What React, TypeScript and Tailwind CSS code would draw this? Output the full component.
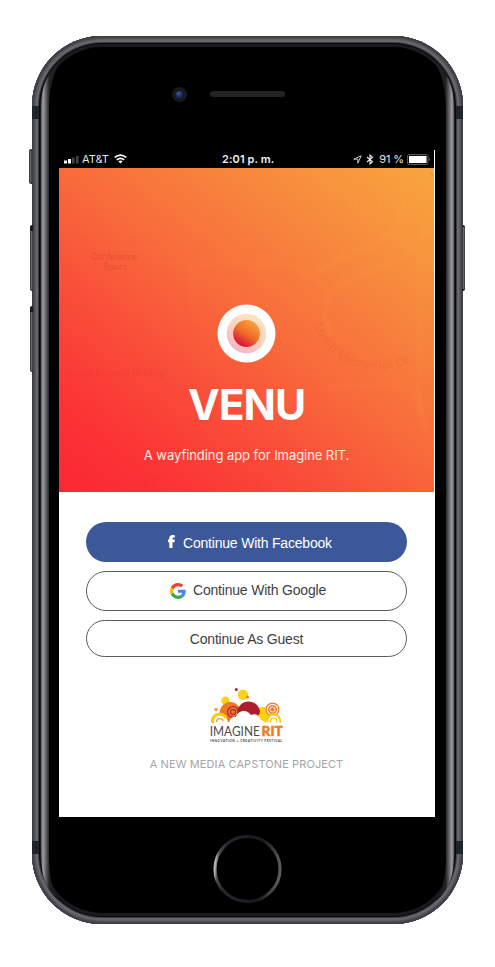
import type { ReactNode } from "react";

function DeviceBevel() {
  const edge =
    "M30 23 C17 33 9 49 9 72 V818 C9 840 14 854 27 865 C20 854 17 840 17 816 V74 C17 54 21 36 30 23Z";
  return (
    <svg className="pointer-events-none absolute inset-0" width="431" height="888" viewBox="0 0 431 888">
      <defs>
        <linearGradient id="bevel" gradientUnits="userSpaceOnUse" x1="9" y1="0" x2="17.5" y2="0">
          <stop offset="0" stopColor="#55565a" />
          <stop offset="0.25" stopColor="#a0a0a2" />
          <stop offset="0.4" stopColor="#828285" />
          <stop offset="0.7" stopColor="#4f4f53" />
          <stop offset="1" stopColor="#202023" />
        </linearGradient>
      </defs>
      <path d={edge} fill="url(#bevel)" />
      <path d={edge} fill="url(#bevel)" transform="translate(431 0) scale(-1 1)" />
      <path d="M0 70h7v13H0zM424 70h7v13h-7zM0 805h7v13H0zM424 805h7v13h-7z" fill="#20242a" />
    </svg>
  );
}

function SideButtons() {
  const base = "absolute bg-linear-to-r from-[#25272b] via-[#66686d] to-[#303136]";
  return (
    <>
      <div className={`${base} -left-[3px] top-[113px] h-[35px] w-[3px] rounded-l-xs border-y-2 border-[#3a3b3f]`} />
      <div className={`${base} -left-[2px] top-[189px] h-[66px] w-[3px] rounded-l-xs border-t-[6px] border-b border-[#181a1e]`} />
      <div className={`${base} -left-[2px] top-[270px] h-[66px] w-[3px] rounded-l-xs border-t-[6px] border-b border-[#181a1e]`} />
      <div className={`${base} -right-[2px] top-[189px] h-[66px] w-[3px] rounded-r-xs border-y-2 border-[#222327]`} />
    </>
  );
}

function StatusBar() {
  return (
    <div className="relative flex h-[18px] w-[375px] items-center justify-between bg-black pr-[4px] pl-[5px] text-[11px] leading-none text-[#e6e6e6]">
      <div className="flex items-center">
        <svg width="15" height="8" viewBox="0 0 15 8" className="mt-[2px]">
          <rect x="0" y="4.5" width="3" height="3" fill="#fff" />
          <rect x="4" y="3" width="3" height="4.5" fill="#fff" />
          <rect x="8" y="1.5" width="2.6" height="6" fill="#444" />
          <rect x="12" y="0" width="2.6" height="7.5" fill="#444" />
        </svg>
        <span className="ml-[3px] mt-[1px]">AT&amp;T</span>
        <svg width="13" height="10" viewBox="0 0 13 10" className="ml-[5px]" fill="none" stroke="#fff" strokeWidth="1.7">
          <path d="M.7 3.4Q6.5-1.3 12.3 3.4M2.8 5.8Q6.5 2.8 10.2 5.8" />
          <path d="M6.5 9.5 4.4 7.4Q6.5 5.8 8.6 7.4Z" fill="#fff" stroke="none" />
        </svg>
      </div>
      <span className="absolute left-[163px] mt-[1px] text-[11px] font-semibold tracking-[0.1px] text-[#f0f0f0]">2:01 p. m.</span>
      <div className="flex items-center">
        <svg width="9" height="9" viewBox="0 0 9 9" className="mr-[4px]" fill="none" stroke="#ddd" strokeWidth="0.9">
          <path d="M.8 4.2 8.2.8 4.8 8.2V4.2Z" />
        </svg>
        <svg width="8" height="11" viewBox="0 0 8 11" className="mr-[5px]" fill="none" stroke="#eee" strokeWidth="1.1">
          <path d="M1 3 6.5 7.8 4 10V1L6.5 3.2 1 8" />
        </svg>
        <span className="mt-[1px] whitespace-nowrap text-[11px] tracking-[-0.1px]">91 %</span>
        <svg width="24" height="11" viewBox="0 0 24 11" className="-mr-px ml-[3px]">
          <rect x="0.5" y="0.5" width="20.5" height="10" rx="1.5" fill="#111" stroke="#555" />
          <rect x="2" y="2" width="17.5" height="7" fill="#fff" />
          <path d="M22 3.5q2 2 0 4z" fill="#555" />
        </svg>
      </div>
    </div>
  );
}

function MapTexture() {
  return (
    <svg className="absolute inset-0" width="375" height="324" viewBox="0 0 375 324">
      <g fill="none" stroke="#ffc24a" strokeOpacity="0.06" strokeWidth="7">
        <path d="M343 0V36C343 60 325 72 300 82C275 92 262 99 258 108" />
        <path d="M375 42C362 80 350 88 325 97C285 112 268 116 266 142C266 152 268 160 272 168" />
        <path d="M361 86V170C361 210 355 235 368 262" />
        <path d="M134 144V103Q134 94 150 94H210Q240 94 270 125" strokeOpacity="0.03" />
        <path d="M270 219H350Q360 221 362 245" strokeOpacity="0.035" />
      </g>
      <path d="M290 37h78" stroke="#fbb84a" strokeOpacity="0.12" strokeWidth="7" strokeDasharray="2 4" />
      <g fill="#c52b2e" fillOpacity="0.33" fontSize="8.8" textAnchor="middle">
        <text x="55" y="92" textLength="46" lengthAdjust="spacingAndGlyphs">Conference</text>
        <text x="56" y="101.5">Room</text>
        <text x="55" y="208" textLength="101" lengthAdjust="spacingAndGlyphs" fillOpacity="0.2">George Eastman Building</text>
        <text x="93" y="316" fontSize="7" fillOpacity="0.12" transform="rotate(90 93 316)">Vend</text>
        <text x="84" y="316" fontSize="7" fillOpacity="0.12" transform="rotate(90 84 316)">Mach</text>
        <text x="197" y="317" fontSize="7" fillOpacity="0.2" transform="rotate(90 197 317)">En</text>
      </g>
      <path id="memorialRoad" d="M256 157C262 178 282 201 318 201C338 201 352 196 361 188" fill="none" />
      <text fontSize="12.5" fill="#d84b2d" fillOpacity="0.22" fontFamily="Noto Sans, sans-serif">
        <textPath href="#memorialRoad" textLength="116">Lomb Memorial Dr</textPath>
      </text>
      <path d="M371 4q2 4 4 4" fill="none" stroke="#d3702a" strokeOpacity="0.5" />
    </svg>
  );
}

function VenuMark() {
  return (
    <svg width="59" height="59" viewBox="0 0 59 59">
      <defs>
        <linearGradient id="dot" x1="0.2" y1="0.9" x2="0.7" y2="0.1">
          <stop offset="0" stopColor="#dc0d3c" />
          <stop offset="0.5" stopColor="#ee6b26" />
          <stop offset="1" stopColor="#f99b38" />
        </linearGradient>
      </defs>
      <circle cx="29.5" cy="29.5" r="29" fill="#fff" />
      <circle cx="29.5" cy="29.5" r="19.8" fill="url(#dot)" fillOpacity="0.3" />
      <circle cx="29.5" cy="29.5" r="13.4" fill="url(#dot)" />
    </svg>
  );
}

function Hero() {
  return (
    <section className="relative h-[324px] w-[375px] bg-[linear-gradient(38deg,#fb2734_0%,#fb3435_16%,#f94e39_34%,#f86a3b_52%,#f7883d_75%,#f8a63e_100%)]">
      <MapTexture />
      <div className="relative flex flex-col items-center pt-[136px]">
        <VenuMark />
        <h1 className="mt-[20px] text-[42.5px] leading-[43px] font-bold tracking-[-1px] text-white">VENU</h1>
        <p className="mt-[20px] whitespace-nowrap text-[13px] leading-[18px] tracking-[-0.06px] text-[#ffece4]">
          A wayfinding app for Imagine RIT.
        </p>
      </div>
    </section>
  );
}

function GoogleG() {
  return (
    <svg width="16" height="16" viewBox="0 0 48 48">
      <path fill="#ea4335" d="M24 9.5c3.5 0 6.7 1.2 9.2 3.6l6.9-6.9C35.9 2.4 30.5 0 24 0 14.6 0 6.5 5.4 2.6 13.2l8 6.2C12.4 13.7 17.7 9.5 24 9.5z" />
      <path fill="#4285f4" d="M47 24.6c0-1.6-.2-3.1-.4-4.6H24v9h12.9c-.6 3-2.3 5.5-4.8 7.2l7.7 6C44.4 38 47 31.8 47 24.6z" />
      <path fill="#fbbc05" d="M10.5 28.6c-.5-1.5-.8-3-.8-4.6s.3-3.1.8-4.6l-8-6.2C.9 16.5 0 20.1 0 24s.9 7.5 2.6 10.8z" />
      <path fill="#34a853" d="M24 48c6.5 0 11.9-2.1 15.9-5.8l-7.7-6c-2.2 1.5-4.9 2.3-8.2 2.3-6.3 0-11.6-4.2-13.5-9.9l-8 6.2C6.5 42.6 14.6 48 24 48z" />
    </svg>
  );
}

function FacebookF() {
  return (
    <svg width="7" height="13" viewBox="0 0 7 13" fill="#fff" className="-mt-[2px]">
      <path d="M1.3 13V7.3H0V4.6h1.3V3.4C1.3 1 2.6 0 4.7 0c.9 0 1.8.1 2.1.2v2.3H5.6c-.9 0-1.1.4-1.1 1v1.1h2.3l-.3 2.7h-2V13z" />
    </svg>
  );
}

function ActionButton({ className, children }: { className: string; children: ReactNode }) {
  return (
    <button
      className={`flex w-[321px] items-center whitespace-nowrap rounded-full font-['Liberation_Sans',Arial,sans-serif] text-[14px] leading-4 tracking-[-0.2px] ${className}`}
    >
      {children}
    </button>
  );
}

function FestivalLogo() {
  return (
    <svg width="75" height="56" viewBox="0 0 75 56">
      <circle cx="34" cy="6.7" r="5.2" fill="#fdd219" />
      <circle cx="16.5" cy="12.7" r="4.2" fill="#fdd219" />
      <circle cx="27.3" cy="1.6" r="1.5" fill="#b6202b" />
      <circle cx="38.5" cy="9" r="1.5" fill="#ef7b22" />
      <circle cx="7" cy="21.5" r="1.7" fill="#f59a23" />
      <path d="M11 27A10.5 10.5 0 0 1 31.5 22L30 34H19Z" fill="#ee7823" />
      <circle cx="24" cy="24" r="5.4" fill="#f28a3a" stroke="#b6202b" strokeWidth="1.3" />
      <circle cx="24" cy="24" r="2.6" fill="#ee7823" stroke="#b6202b" strokeWidth="1.2" />
      <path d="M43 30C44 16 62 15 65 30L61 35H54Z" fill="#fdd20a" />
      <path d="M28 28C27 10 48 9 51 23C51 27 47 31 43 31Z" fill="#ac1e2d" />
      <path d="M20 35C21 30 24 28 27 29C29 22 38 21 42 27C46 25 50 27 51 31L57 35Z" fill="#fff" />
      <circle cx="63.5" cy="21.5" r="7" fill="#ef7b22" />
      <circle cx="63.5" cy="21.5" r="5.2" fill="none" stroke="#fff" strokeWidth="1.2" />
      <circle cx="63.5" cy="21.5" r="2.6" fill="#ef7b22" stroke="#fff" strokeWidth="0.9" />
      <path d="M2 35A8.5 8.5 0 0 1 19 35Z" fill="#fff" />
      <path d="M3.6 35V32A7.2 7.2 0 0 1 17 30" fill="none" stroke="#fdc80b" strokeWidth="3" />
      <path d="M7.5 34A3.5 3.5 0 0 1 14.3 33" fill="none" stroke="#f59a23" strokeWidth="1.3" />
      <path d="M57 35A7.7 7.7 0 0 1 72.5 35Z" fill="#fff" />
      <path d="M58.5 34.5A6.5 6.5 0 1 1 71 34.5" fill="none" stroke="#fdc80b" strokeWidth="2" />
      <path d="M61.8 34.5A3.2 3.2 0 1 1 67.6 34.5" fill="none" stroke="#fdc80b" strokeWidth="1.3" />
      <g fontFamily="Lato, sans-serif">
        <text x="0.8" y="47.8" fill="#4a4a4c" fontSize="12.6" textLength="50" lengthAdjust="spacingAndGlyphs">IMAGINE</text>
        <text x="52.5" y="47.8" fill="#ef7b22" stroke="#ef7b22" strokeWidth="0.4" fontSize="12.6" fontWeight="900" textLength="21.3" lengthAdjust="spacingAndGlyphs">RIT</text>
        <text x="1" y="54" fill="#444" fontSize="3.2" fontWeight="700" textLength="72">INNOVATION + CREATIVITY FESTIVAL</text>
      </g>
    </svg>
  );
}

function HomeButton() {
  return (
    <svg width="70" height="70" viewBox="0 0 70 70">
      <defs>
        <linearGradient id="home" x1="0" y1="0.5" x2="1" y2="0.6">
          <stop offset="0" stopColor="#b0b0b2" />
          <stop offset="0.04" stopColor="#4a4a4f" />
          <stop offset="0.15" stopColor="#26262e" />
          <stop offset="0.7" stopColor="#19191e" />
          <stop offset="1" stopColor="#5c5c60" />
        </linearGradient>
      </defs>
      <circle cx="34.5" cy="35" r="32.5" fill="none" stroke="url(#home)" strokeWidth="3.2" />
    </svg>
  );
}

export default function App() {
  return (
    <main className="h-[967px] w-[495px] overflow-hidden bg-white pt-[36px] pl-[32px] font-[Inter,'Noto_Sans',sans-serif]">
      <div className="relative flex h-[888px] w-[431px] flex-col rounded-[70px] bg-black shadow-[inset_0_0_0_1px_#3d4045,inset_0_0_0_2px_#43454a,inset_0_0_0_3px_#4e5055,inset_0_0_0_4px_#5d5e63,inset_0_0_0_6px_#66676b,inset_0_0_0_7px_#3b3c40,inset_0_0_0_8px_#0a0a0b,inset_0_0_0_11px_#1a1b1e]">
        <DeviceBevel />
        <SideButtons />
        <div className="flex h-[114px] items-center gap-[23px] pl-[140px] pt-[2px]">
          <div className="flex size-[15px] items-center justify-center rounded-full bg-[#19191c]">
            <div className="size-[7px] rounded-full bg-[radial-gradient(circle_at_35%_35%,#40598c,#1b2d79_50%,#101b4a)]" />
          </div>
          <div className="h-[6px] w-[75px] rounded-full bg-[#232323]" />
        </div>
        <div className="ml-[27px] flex h-[667px] w-[376px] flex-col bg-white">
          <StatusBar />
          <Hero />
          <section className="flex w-[375px] flex-col items-center pt-[30px]">
            <ActionButton className="h-[40px] bg-[#3b5998] pl-[82px] text-white">
              <FacebookF />
              <span className="ml-[8px] mt-[2px]">Continue With Facebook</span>
            </ActionButton>
            <ActionButton className="mt-[9px] h-[40px] border border-[#5b5b5e] pl-[83px] text-[#3f4044]">
              <GoogleG />
              <span className="ml-[7px] -mt-[2px]">Continue With Google</span>
            </ActionButton>
            <ActionButton className="mt-[9px] h-[37px] justify-center border border-[#5b5b5e] text-[#3f4044]">
              Continue As Guest
            </ActionButton>
            <div className="mt-[31px]">
              <FestivalLogo />
            </div>
            <p className="mt-[12px] whitespace-nowrap text-[11px] leading-4 tracking-[0.1px] text-[#a5a5a7]">
              A NEW MEDIA CAPSTONE PROJECT
            </p>
          </section>
        </div>
        <div className="mt-[17px] flex justify-center">
          <HomeButton />
        </div>
      </div>
    </main>
  );
}
